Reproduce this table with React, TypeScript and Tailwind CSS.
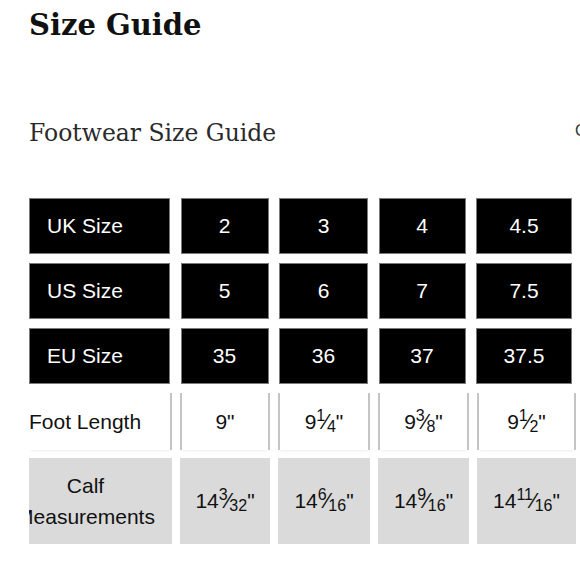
import React from "react";

const sans = { fontFamily: '"Liberation Sans", Arial, sans-serif' };

function Frac({ whole, num, den }: { whole: string; num?: string; den?: string }) {
  return (
    <span className="inline-flex items-baseline whitespace-nowrap">
      <span>{whole}</span>
      {num && (
        <>
          <span className="text-[16px] relative -top-[8px] leading-none">{num}</span>
          <span className="text-[22px] leading-none -mx-[1px]">⁄</span>
          <span className="text-[16px] relative top-[3px] leading-none">{den}</span>
        </>
      )}
      <span>"</span>
    </span>
  );
}

const top3 = [
  ["UK Size", "2", "3", "4", "4.5"],
  ["US Size", "5", "6", "7", "7.5"],
  ["EU Size", "35", "36", "37", "37.5"],
];

const topW = ["w-[141px]", "w-[88px]", "w-[89px]", "w-[87px]", "w-[96px]"];
const botW = ["w-[143px]", "w-[90px]", "w-[92px]", "w-[91px]", "w-[99px]"];

const foot: [string, string?, string?][] = [
  ["9"],
  ["9", "1", "4"],
  ["9", "3", "8"],
  ["9", "1", "2"],
];
const calf: [string, string, string][] = [
  ["14", "3", "32"],
  ["14", "6", "16"],
  ["14", "9", "16"],
  ["14", "11", "16"],
];

export default function App() {
  return (
    <div className="w-[580px] h-[580px] overflow-hidden bg-white pl-[29px] relative">
      <h1
        className="text-[29px] font-bold leading-[34px] pt-[8px] text-[#111] whitespace-nowrap"
        style={{ fontFamily: '"DejaVu Serif", Georgia, serif' }}
      >
        Size Guide
      </h1>
      <div className="flex items-start mt-[78px] whitespace-nowrap">
        <div
          className="text-[23.5px] leading-[26px] text-[#2a2a2a] w-[546px] shrink-0"
          style={{ fontFamily: '"DejaVu Serif", Georgia, serif' }}
        >
          Footwear Size Guide
        </div>
        <div className="text-[16px] leading-[20px] text-[#333] shrink-0 mt-[1px]" style={sans}>
          Clothing Size Guide
        </div>
      </div>

      <div className="mt-[52px] flex flex-col gap-[9px]" style={sans}>
        {top3.map((row, r) => (
          <div key={r} className="flex gap-[10.5px] h-[56px]">
            {row.map((c, i) => (
              <div
                key={i}
                className={`${topW[i]} shrink-0 bg-black text-white text-[21px] flex items-center border border-[#7a7a7a] ${
                  i === 0 ? "pl-[17px]" : "justify-center"
                }`}
              >
                {c}
              </div>
            ))}
          </div>
        ))}
      </div>

      <div className="mt-[9px] flex gap-[8px] h-[57px] text-[#111] text-[21px]" style={sans}>
        <div className={`${botW[0]} shrink-0 flex items-center border-r-2 border-[#c4c4c4] shadow-[0_3px_3px_-2px_rgba(0,0,0,0.08)]`}>
          Foot Length
        </div>
        {foot.map((f, i) => (
          <div
            key={i}
            className={`${botW[i + 1]} shrink-0 flex items-center justify-center border-x-2 border-[#c4c4c4] shadow-[0_3px_3px_-2px_rgba(0,0,0,0.08)]`}
          >
            <Frac whole={f[0]} num={f[1]} den={f[2]} />
          </div>
        ))}
      </div>

      <div className="mt-[8px] flex gap-[8px] h-[86px] text-[#111] text-[21px]" style={sans}>
        <div className={`${botW[0]} shrink-0 bg-[#dadada] overflow-hidden pr-[30px] flex flex-col items-center justify-center leading-[31px]`}>
          <div className="whitespace-nowrap">Calf</div>
          <div className="whitespace-nowrap">Measurements</div>
        </div>
        {calf.map((f, i) => (
          <div
            key={i}
            className={`${botW[i + 1]} shrink-0 bg-[#dadada] flex items-center justify-center`}
          >
            <Frac whole={f[0]} num={f[1]} den={f[2]} />
          </div>
        ))}
      </div>
    </div>
  );
}
